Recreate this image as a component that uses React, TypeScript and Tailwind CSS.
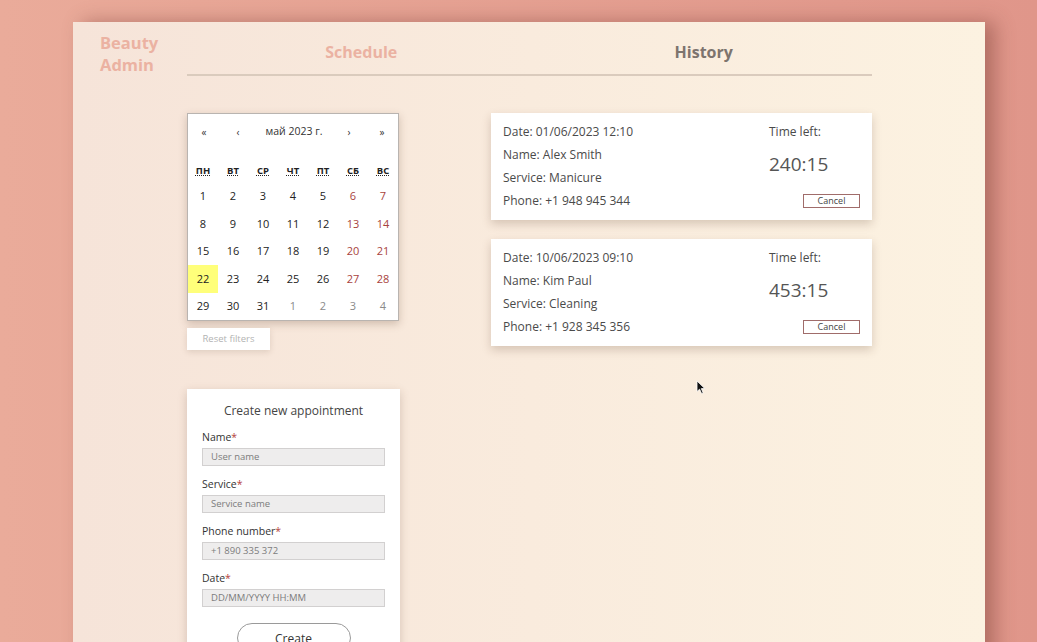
const WEEK = ["пн", "вт", "ср", "чт", "пт", "сб", "вс"];

type Day = { n: number; muted?: boolean };

const WEEKS: Day[][] = [
  [1, 2, 3, 4, 5, 6, 7].map((n) => ({ n })),
  [8, 9, 10, 11, 12, 13, 14].map((n) => ({ n })),
  [15, 16, 17, 18, 19, 20, 21].map((n) => ({ n })),
  [22, 23, 24, 25, 26, 27, 28].map((n) => ({ n })),
  [
    { n: 29 },
    { n: 30 },
    { n: 31 },
    { n: 1, muted: true },
    { n: 2, muted: true },
    { n: 3, muted: true },
    { n: 4, muted: true },
  ],
];

const APPOINTMENTS = [
  {
    date: "01/06/2023 12:10",
    name: "Alex Smith",
    service: "Manicure",
    phone: "+1 948 945 344",
    left: "240:15",
  },
  {
    date: "10/06/2023 09:10",
    name: "Kim Paul",
    service: "Cleaning",
    phone: "+1 928 345 356",
    left: "453:15",
  },
];

const FIELDS = [
  { label: "Name", placeholder: "User name" },
  { label: "Service", placeholder: "Service name" },
  { label: "Phone number", placeholder: "+1 890 335 372" },
  { label: "Date", placeholder: "DD/MM/YYYY HH:MM" },
];

function Calendar() {
  return (
    <div className="w-[212px] border border-[#b9b4b0] bg-white shadow-[0_3px_8px_rgba(90,60,40,0.25)]">
      <div className="flex h-[36px] items-center text-[10px] text-[#333]">
        <button className="w-[32px] text-center">«</button>
        <button className="w-[36px] text-center">‹</button>
        <span className="flex-1 text-center text-[10.5px]">май 2023 г.</span>
        <button className="w-[34px] text-center">›</button>
        <button className="w-[32px] text-center">»</button>
      </div>
      <div className="mt-[9px] grid h-[24px] grid-cols-7 items-center">
        {WEEK.map((w) => (
          <abbr
            key={w}
            title={w}
            className="text-center text-[9.5px] font-bold uppercase text-[#222] underline decoration-dotted"
          >
            {w}
          </abbr>
        ))}
      </div>
      <div>
        {WEEKS.map((week, i) => (
          <div key={i} className="grid h-[27.4px] grid-cols-7">
            {week.map((d, j) => (
              <div
                key={j}
                className={
                  "flex items-center justify-center text-[11px] " +
                  (d.n === 22 && !d.muted
                    ? "bg-[#ffff7a] text-[#222]"
                    : d.muted
                      ? "text-[#8a8a8a]"
                      : j >= 5
                        ? "text-[#a8433d]"
                        : "text-[#222]")
                }
              >
                {d.n}
              </div>
            ))}
          </div>
        ))}
      </div>
    </div>
  );
}

function AppointmentCard({ a }: { a: (typeof APPOINTMENTS)[number] }) {
  return (
    <div className="flex h-[107px] justify-between bg-white pl-[12px] pr-[12px] pt-[7px] text-[12px] text-[#4a4a4a] shadow-[0_4px_9px_rgba(90,60,40,0.22)]">
      <div>
        <p className="h-[23px] leading-[23px]">Date: {a.date}</p>
        <p className="h-[23px] leading-[23px]">Name: {a.name}</p>
        <p className="h-[23px] leading-[23px]">Service: {a.service}</p>
        <p className="h-[23px] leading-[23px]">Phone: {a.phone}</p>
      </div>
      <div className="flex w-[91px] flex-col">
        <p className="h-[23px] leading-[23px]">Time left:</p>
        <p className="flex h-[42px] items-center text-[19px] text-[#555]">{a.left}</p>
        <button className="ml-auto mt-[9px] h-[14px] w-[57px] border border-[#a06c6a] text-[9px] leading-[12px] text-[#444]">
          Cancel
        </button>
      </div>
    </div>
  );
}

function CreateForm() {
  return (
    <div className="h-[280px] w-[213px] bg-white px-[15px] pt-[14px] shadow-[0_3px_9px_rgba(90,60,40,0.22)]">
      <h2 className="text-center text-[12px] leading-[16px] text-[#444]">Create new appointment</h2>
      {FIELDS.map((f) => (
        <div key={f.label} className="mt-[11px]">
          <label className="block text-[10.5px] leading-[14px] text-[#333]">
            {f.label}
            <span className="text-[#b5403a]">*</span>
          </label>
          <input
            placeholder={f.placeholder}
            className="mt-[4px] block h-[18px] w-[183px] border border-[#d2d0d0] bg-[#eeeded] px-[8px] text-[9.5px] placeholder:text-[#7c7c7c]"
          />
        </div>
      ))}
      <button className="mx-auto mt-[16px] block h-[30px] w-[114px] rounded-full border border-[#9a9a9a] pt-[2px] text-[12px] text-[#333]">
        Create
      </button>
    </div>
  );
}

function Pointer() {
  return (
    <svg
      className="pointer-events-none absolute left-[696px] top-[380px]"
      width="10"
      height="15"
      viewBox="0 0 10 15"
    >
      <path d="M1 1 L1 11.5 L3.6 9.2 L5.6 13.6 L7.2 12.9 L5.3 8.6 L8.8 8.6 Z" fill="#111" stroke="#fff" strokeWidth="0.8" />
    </svg>
  );
}

export default function App() {
  return (
    <div
      className="relative h-[642px] overflow-hidden bg-gradient-to-r from-[#eaab9a] to-[#e0968a] pl-[73px] pt-[22px]"
      style={{ fontFamily: '"Open Sans", "Noto Sans", sans-serif' }}
    >
      <div className="flex h-[720px] w-[912px] bg-gradient-to-r from-[#f6e4d9] to-[#fcf2e1] pl-[27px] pt-[10px] shadow-[10px_0_18px_rgba(120,60,50,0.45)]">
        <div className="w-[87px] text-[16.5px] font-bold leading-[22px] text-[#ebb2a2]">
          <div>Beauty</div>
          <div>Admin</div>
        </div>
        <div className="w-[685px]">
          <nav className="flex h-[44px] border-b-2 border-[#dacbbd]">
            <a className="flex h-[40px] flex-1 items-center justify-center pl-[6px] text-[16px] font-bold text-[#ebb2a2]">
              Schedule
            </a>
            <a className="flex h-[40px] flex-1 items-center justify-center pl-[6px] text-[16px] font-bold text-[#7d746e]">
              History
            </a>
          </nav>
          <div className="mt-[37px] flex">
            <div className="w-[213px]">
              <Calendar />
              <button className="mt-[7px] h-[22px] w-[83px] bg-white text-[9.5px] text-[#b3b3b3] shadow-[0_2px_6px_rgba(90,60,40,0.15)]">
                Reset filters
              </button>
              <div className="mt-[39px]">
                <CreateForm />
              </div>
            </div>
            <div className="ml-[91px] flex w-[381px] flex-col gap-[19px]">
              {APPOINTMENTS.map((a) => (
                <AppointmentCard key={a.date} a={a} />
              ))}
            </div>
          </div>
        </div>
      </div>
      <Pointer />
    </div>
  );
}
